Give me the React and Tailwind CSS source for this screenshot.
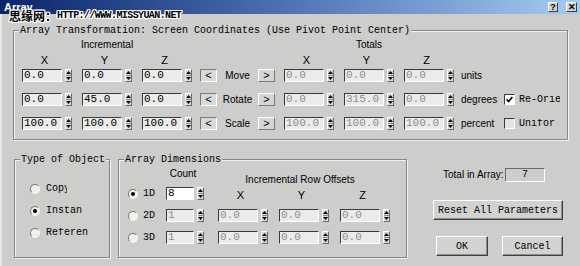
const MONO = "font-['Liberation_Mono','DejaVu_Sans_Mono',monospace]"
const SANS = "font-['Liberation_Sans_Narrow','Liberation_Sans',Arial,sans-serif]"

function Spin() {
  return (
    <div className="flex h-[13px] w-[7px] flex-col items-center justify-between border border-t-white border-l-white border-r-[#6a6a6a] border-b-[#6a6a6a] bg-[#d9d9d7] py-[1px]">
      <svg width="5" height="3" viewBox="0 0 5 3">
        <path d="M2.5 0L5 3H0z" fill="#000" />
      </svg>
      <div className="h-px w-full bg-[#8a8a8a]" />
      <svg width="5" height="3" viewBox="0 0 5 3">
        <path d="M0 0H5L2.5 3z" fill="#000" />
      </svg>
    </div>
  )
}

function Field({ value, width = 'w-[40px]', dim = false, bg = 'bg-[#ebebea]' }) {
  return (
    <div
      className={`${width} ${bg} flex h-[13px] items-center overflow-hidden border border-t-[#3a3a3a] border-l-[#3a3a3a] border-r-white border-b-white pl-px text-[11px] leading-none ${MONO} ${
        dim ? 'text-[#8e8e8e]' : 'text-black'
      }`}
    >
      {value}
    </div>
  )
}

function SpinField(props) {
  return (
    <div className="flex items-center gap-[3px]">
      <Field {...props} />
      <Spin />
    </div>
  )
}

function Group({ title, className = '', children }) {
  return (
    <div className={`relative border border-[#868686] shadow-[inset_1px_1px_0_#f2f2f2,1px_1px_0_#f2f2f2] ${className}`}>
      <span className={`absolute -top-[7px] left-[5px] bg-[#cdcdcb] px-px text-[10px] leading-[13px] text-black ${MONO}`}>
        {title}
      </span>
      {children}
    </div>
  )
}

function Radio({ on }) {
  return (
    <div className="flex h-[10px] w-[10px] items-center justify-center rounded-full border border-t-[#7a7a7a] border-l-[#7a7a7a] border-r-[#f4f4f4] border-b-[#f4f4f4] bg-[#f0f0ef]">
      {on && <div className="h-[4px] w-[4px] rounded-full bg-black" />}
    </div>
  )
}

function Check({ on, dim }) {
  return (
    <div
      className={`flex h-[11px] w-[11px] items-center justify-center border border-t-[#3a3a3a] border-l-[#3a3a3a] border-r-white border-b-white ${
        dim ? 'bg-[#e4e4e3]' : 'bg-white'
      }`}
    >
      {on && (
        <svg width="7" height="7" viewBox="0 0 7 7">
          <path d="M0.6 3.4L2.6 5.5L6.4 1" stroke="#000" strokeWidth="1.6" fill="none" />
        </svg>
      )}
    </div>
  )
}

function Button({ children, className = '' }) {
  return (
    <div
      className={`flex h-[20px] items-center justify-center border border-t-white border-l-white border-r-[#404040] border-b-[#404040] bg-[#d2d2d0] shadow-[inset_-1px_-1px_0_#8c8c8c] text-[10px] text-black ${MONO} ${className}`}
    >
      {children}
    </div>
  )
}

const rows = [
  { inc: ['0.0', '0.0', '0.0'], label: 'Move', tot: ['0.0', '0.0', '0.0'], unit: 'units' },
  {
    inc: ['0.0', '45.0', '0.0'],
    label: 'Rotate',
    tot: ['0.0', '315.0', '0.0'],
    unit: 'degrees',
    check: { text: 'Re-Orient', on: true, width: 'w-[41px]' },
  },
  {
    inc: ['100.0', '100.0', '100.0'],
    label: 'Scale',
    tot: ['100.0', '100.0', '100.0'],
    unit: 'percent',
    check: { text: 'Uniform', on: false, dim: true, width: 'w-[36px]' },
  },
]

function Axes() {
  return (
    <div className={`flex gap-[15px] text-[11px] leading-[12px] ${SANS}`}>
      {['X', 'Y', 'Z'].map((a) => (
        <div key={a} className="w-[45px] text-center">
          {a}
        </div>
      ))}
    </div>
  )
}

export default function App() {
  return (
    <div className="relative flex h-[266px] w-[580px] flex-col overflow-hidden bg-[#cdcdcb] text-black">
      {/* title bar */}
      <div className="flex h-[14px] shrink-0 items-center bg-gradient-to-r from-[#0a246a] via-[#4f73b5] to-[#a9cbf0] pl-[4px] pr-[3px]">
        <span className="font-['Liberation_Sans',sans-serif] text-[11px] leading-none font-bold text-white">Array</span>
        <div className="ml-auto flex items-center gap-[8px]">
          <div className="flex h-[10px] w-[10px] items-center justify-center border border-t-white border-l-white border-r-[#404040] border-b-[#404040] bg-[#d2d2d0] font-['Liberation_Sans',sans-serif] text-[9px] leading-none font-bold">
            ?
          </div>
          <div className="flex h-[10px] w-[11px] items-center justify-center border border-t-white border-l-white border-r-[#404040] border-b-[#404040] bg-[#d2d2d0] font-['Liberation_Sans',sans-serif] text-[9px] leading-none font-bold">
            ✕
          </div>
        </div>
      </div>

      {/* watermark */}
      <div className="absolute left-[9px] top-[9px] flex items-center text-black [text-shadow:1px_0_#fff,-1px_0_#fff,0_1px_#fff,0_-1px_#fff,1px_1px_#fff,-1px_-1px_#fff,1px_-1px_#fff,-1px_1px_#fff]">
        <span className="font-['Noto_Sans_CJK_SC',sans-serif] text-[12px] leading-[13px] font-bold">思缘网：</span>
        <span className={`text-[10px] leading-[13px] font-bold tracking-[-0.6px] ${MONO}`}>HTTP://WWW.MISSYUAN.NET</span>
      </div>

      <div className="flex flex-1 flex-col border-l-2 border-l-[#e8e8e6] pl-[11px] pt-[16px]">
        {/* top group */}
        <Group title="Array Transformation: Screen Coordinates (Use Pivot Point Center)" className="h-[110px] w-[555px]">
          <div className="flex flex-col pl-[8px] pt-[8px]">
            <div className={`flex text-[10px] leading-[12px] ${SANS}`}>
              <div className="w-[170px] text-center">Incremental</div>
              <div className="ml-[92px] w-[170px] text-center">Totals</div>
            </div>
            <div className="mt-[3px] flex">
              <Axes />
              <div className="ml-[97px]">
                <Axes />
              </div>
            </div>
            <div className="mt-[3px] flex flex-col gap-[11px]">
              {rows.map((r) => (
                <div key={r.label} className="flex h-[13px] items-center">
                  <div className="flex gap-[10px]">
                    {r.inc.map((v, i) => (
                      <SpinField key={i} value={v} />
                    ))}
                  </div>
                  <div className={`ml-[8px] flex h-[13px] w-[17px] items-center justify-center border border-t-[#7a7a7a] border-l-[#7a7a7a] border-r-white border-b-white bg-[#dadad8] text-[11px] leading-none ${SANS}`}>
                    &lt;
                  </div>
                  <div className={`w-[41px] text-center text-[10px] leading-none ${SANS}`}>{r.label}</div>
                  <div className={`flex h-[13px] w-[17px] items-center justify-center border border-t-white border-l-white border-r-[#7a7a7a] border-b-[#7a7a7a] bg-[#d6d6d4] text-[11px] leading-none ${SANS}`}>
                    &gt;
                  </div>
                  <div className="ml-[9px] flex gap-[10px]">
                    {r.tot.map((v, i) => (
                      <SpinField key={i} value={v} dim />
                    ))}
                  </div>
                  <div className={`ml-[7px] w-[43px] text-[10px] leading-none ${SANS}`}>{r.unit}</div>
                  {r.check && (
                    <div className="flex items-center gap-[4px]">
                      <Check on={r.check.on} dim={r.check.dim} />
                      <div className={`${r.check.width} overflow-hidden whitespace-nowrap text-[10px] leading-none ${MONO}`}>
                        {r.check.text}
                      </div>
                    </div>
                  )}
                </div>
              ))}
            </div>
          </div>
        </Group>

        {/* bottom row */}
        <div className="mt-[19px] flex items-start">
          <Group title="Type of Object" className="ml-px h-[99px] w-[96px]">
            <div className={`flex flex-col gap-[8px] pl-[15px] pt-[22px] text-[10px] leading-none ${MONO}`}>
              {[
                { t: 'Copy', w: 'w-[21px]' },
                { t: 'Instance', w: 'w-[36px]', on: true },
                { t: 'Reference', w: 'w-[42px]' },
              ].map((o) => (
                <div key={o.t} className="flex h-[14px] items-center gap-[6px]">
                  <Radio on={o.on} />
                  <div className={`${o.w} overflow-hidden whitespace-nowrap`}>{o.t}</div>
                </div>
              ))}
            </div>
          </Group>

          <Group title="Array Dimensions" className="ml-[8px] h-[99px] w-[289px]">
            <div className="flex">
              {/* left: dimension + count */}
              <div className="flex flex-col pl-[9px] pt-[8px]">
                <div className={`ml-[38px] w-[34px] text-center text-[10px] leading-[12px] ${SANS}`}>Count</div>
                <div className="mt-[7px] flex flex-col gap-[9px]">
                  {[
                    { d: '1D', v: '8', on: true },
                    { d: '2D', v: '1' },
                    { d: '3D', v: '1' },
                  ].map((r) => (
                    <div key={r.d} className="flex h-[13px] items-center">
                      <Radio on={r.on} />
                      <div className={`ml-[5px] w-[12px] text-[10px] leading-none ${MONO}`}>{r.d}</div>
                      <div className="ml-[11px]">
                        <SpinField value={r.v} width="w-[28px]" dim={!r.on} bg={r.on ? 'bg-white' : 'bg-[#ebebea]'} />
                      </div>
                    </div>
                  ))}
                </div>
              </div>
              {/* right: row offsets */}
              <div className="ml-[14px] flex flex-col pt-[14px]">
                <div className={`w-[164px] text-center text-[10px] leading-[12px] ${SANS}`}>Incremental Row Offsets</div>
                <div className={`mt-[3px] flex gap-[16px] text-[11px] leading-[13px] ${SANS}`}>
                  {['X', 'Y', 'Z'].map((a) => (
                    <div key={a} className="w-[45px] text-center">
                      {a}
                    </div>
                  ))}
                </div>
                <div className="mt-[7px] flex flex-col gap-[9px]">
                  {[0, 1].map((r) => (
                    <div key={r} className="flex h-[13px] gap-[11px]">
                      {[0, 1, 2].map((c) => (
                        <SpinField key={c} value="0.0" dim />
                      ))}
                    </div>
                  ))}
                </div>
              </div>
            </div>
          </Group>

          {/* right column */}
          <div className="ml-[26px] flex w-[130px] flex-col">
            <div className="mt-[9px] flex h-[14px] items-center pl-[10px]">
              <div className={`w-[62px] text-[10px] leading-none ${SANS}`}>Total in Array:</div>
              <div className={`flex h-[14px] w-[40px] items-center justify-center border border-t-[#6a6a6a] border-l-[#6a6a6a] border-r-white border-b-white text-[10px] leading-none ${MONO}`}>
                7
              </div>
            </div>
            <Button className="mt-[18px] w-[130px]">Reset All Parameters</Button>
            <div className="mt-[16px] flex">
              <Button className="ml-[3px] w-[52px]">OK</Button>
              <Button className="ml-[14px] w-[61px]">Cancel</Button>
            </div>
          </div>
        </div>
      </div>
    </div>
  )
}
